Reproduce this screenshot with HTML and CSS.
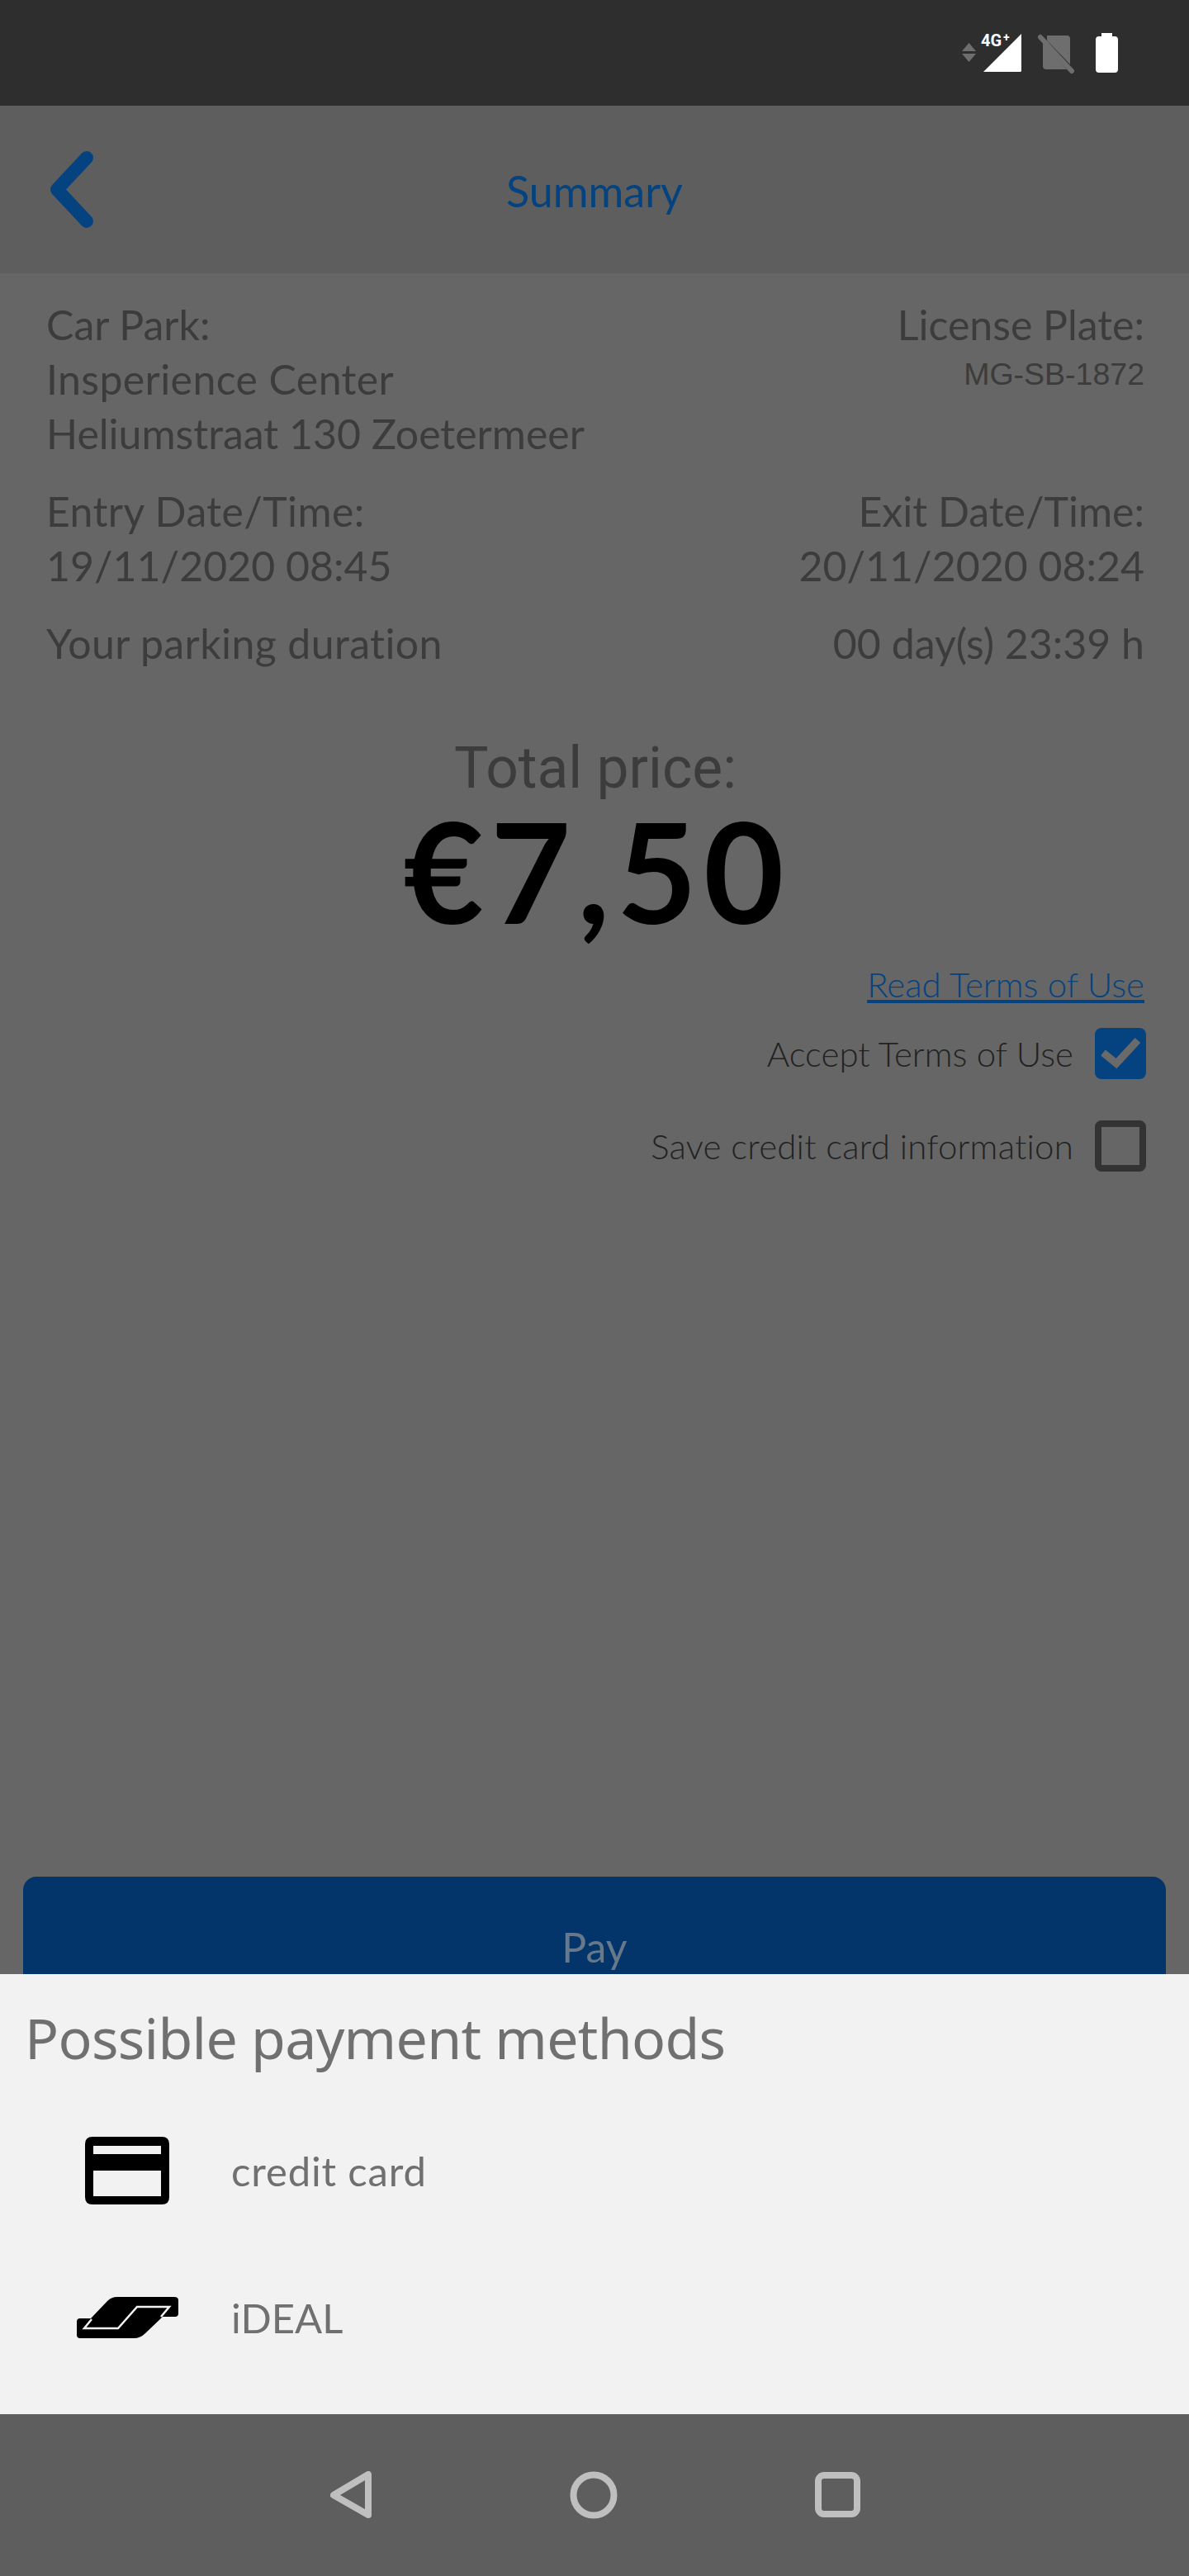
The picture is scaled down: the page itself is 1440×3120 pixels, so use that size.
FILE: index.html
```html
<!DOCTYPE html>
<html lang="en">
<head>
<meta charset="utf-8">
<title>Summary</title>
<link rel="stylesheet" href="styles.css">
</head>
<body>
<div class="screen">
  <div class="status">
    <svg class="status-icons" width="200" height="60" viewBox="0 0 200 60">
      <path class="dim" d="M5 22 L13.5 12 L22 22Z M5 25 L13.5 35 L22 25Z"/>
      <path class="white" d="M31 47 L77 1 V45.5 Q77 47 75.500 47Z"/>
      <text x="28" y="16" class="net">4G</text>
      <text x="55" y="10" class="net-plus">+</text>
      <path class="dim" d="M108 3 H132 Q136 3 136 7 V38 L108 9Z M103 10 L132 44 H107 Q103 44 103 40Z"/>
      <path class="slash" d="M100 5 L138 46"/>
      <path class="white" d="M174 0 H187 V4 H190 Q194 4 194 8 V44 Q194 48 190 48 H171 Q167 48 167 44 V8 Q167 4 171 4 H174Z"/>
    </svg>
  </div>
  <header class="topbar">
    <svg class="back" width="56" height="96" viewBox="0 0 56 96">
      <path d="M46 9 L10 47.500 L46 86" />
    </svg>
    <h1 class="title">Summary</h1>
  </header>
  <main class="content">
    <div class="details">
      <div class="row">
        <div>Car Park:<br><span class="wide">Insperience Center</span><br>Heliumstraat 130 Zoetermeer</div>
        <div class="right">License Plate:<br><span class="plate">MG-SB-1872</span></div>
      </div>
      <div class="row">
        <div><span class="wide">Entry Date/Time:</span><br>19/11/2020 08:45</div>
        <div class="right">Exit Date/Time:<br>20/11/2020 08:24</div>
      </div>
      <div class="row">
        <div><span class="wide">Your parking duration</span></div>
        <div class="right">00 day(s) 23:39 h</div>
      </div>
    </div>
    <div class="price">
      <div class="price-label">Total price:</div>
      <div class="price-value">€7,50</div>
    </div>
    <div class="terms">
      <a class="terms-link">Read Terms of Use</a>
      <div class="check-row">
        <span>Accept Terms of Use</span>
        <span class="box checked">
          <svg width="62" height="62" viewBox="0 0 62 62"><path d="M10 30 L26 43 L52 15"/></svg>
        </span>
      </div>
      <div class="check-row">
        <span class="save-label">Save credit card information</span>
        <span class="box"></span>
      </div>
    </div>
    <button class="pay">Pay</button>
  </main>
  <section class="sheet">
    <h2 class="sheet-title">Possible payment methods</h2>
    <div class="method">
      <span class="method-icon">
        <svg width="124" height="84" viewBox="0 0 124 84">
          <path fill-rule="evenodd" d="M20 1 H104 Q113 1 113 10 V74 Q113 83 104 83 H20 Q11 83 11 74 V10 Q11 1 20 1Z M21 12 V22 H103 V12Z M21 42 V73 H103 V42Z"/>
        </svg>
      </span>
      <span class="credit-label">credit card</span>
    </div>
    <div class="method">
      <span class="method-icon">
        <svg width="124" height="50" viewBox="0 0 124 50">
          <path d="M50 0 H119 Q124 0 124 4 V20 Q124 24 120 24 H105 L84 44 Q78 50 70 50 H5 Q1 50 1 46 V30 Q1 26 5 26 H18 L38 5 Q43 0 50 0Z"/>
          <path class="card-line" d="M19 27 L10 38 H51 L74 12 H113 L103 24"/>
        </svg>
      </span>
      <span>iDEAL</span>
    </div>
  </section>
  <nav class="navbar">
    <svg width="52" height="58" viewBox="0 0 52 58"><path d="M46 4 V53 L4 29Z"/></svg>
    <svg width="58" height="58" viewBox="0 0 58 58"><circle cx="29" cy="29" r="24.500"/></svg>
    <svg width="58" height="58" viewBox="0 0 58 58"><rect x="5" y="5" width="47" height="47" rx="7"/></svg>
  </nav>
</div>
</body>
</html>
```
FILE: styles.css
```css
* { box-sizing: border-box; }
html, body { margin: 0; padding: 0; }
.screen {
  width: 1440px; height: 3120px; display: flex; flex-direction: column;
  background: #666; font-family: Lato, sans-serif; font-weight: 300; color: #333;
  overflow: hidden;
}
.status { height: 128px; flex: none; background: #2e2e2e; position: relative; }
.status-icons { position: absolute; left: 1160px; top: 40px; overflow: visible; }
.dim { fill: #6e6e6e; }
.white { fill: #fff; }
.net { font: 700 20px Roboto, sans-serif; fill: #fff; }
.net-plus { font: 700 14px Roboto, sans-serif; fill: #fff; }
.slash { stroke: #6e6e6e; stroke-width: 6; stroke-linecap: round; fill: none; }
.topbar { height: 203px; flex: none; background: #5e5e5e; display: flex; align-items: center; justify-content: center; position: relative; }
.back { position: absolute; left: 59px; top: 54px; }
.back path { fill: none; stroke: #04437f; stroke-width: 16; stroke-linecap: round; stroke-linejoin: round; }
.title { margin: 0; font: 400 52px/1 Lato, sans-serif; color: #04437f; position: relative; top: 1px; }
.content { flex: 1; min-height: 0; display: flex; flex-direction: column; overflow: hidden; }
.details { padding: 29px 56px 0; display: flex; flex-direction: column; gap: 28px; font-size: 50px; font-weight: 400; line-height: 66px; color: #3c3c3c; }
.row { display: flex; justify-content: space-between; }
.right { text-align: right; margin-right: -2px; }
.wide { letter-spacing: 0.4px; }
.plate { display: block; font: 400 37.5px/54px "Liberation Sans", sans-serif; }
.price { text-align: center; margin-top: 80px; }
.price-label { font: 400 69.500px/78px Roboto, sans-serif; color: #3c3c3c; padding-left: 2px; }
.price-value { font: 700 168px/168px Lato, sans-serif; color: #000; letter-spacing: 8px; padding-left: 6px; }
.terms { display: flex; flex-direction: column; align-items: flex-end; padding-right: 52px; font-size: 42px; }
.terms-link { color: #04437f; text-decoration: underline; margin-right: 2px; line-height: 58px; margin-top: 25px; }
.check-row { display: flex; align-items: center; gap: 26px; height: 62px; color: #222; }
.check-row:nth-child(2) { margin-top: 24px; }
.check-row:nth-child(3) { margin-top: 50px; }
.save-label { letter-spacing: 0.2px; }
.box { width: 62px; height: 62px; border-radius: 8px; border: 8px solid #333; }
.box.checked { border: 0; background: #04437f; }
.box svg { display: block; }
.box svg path { fill: none; stroke: #6a6a6a; stroke-width: 9; }
.pay {
  margin: auto 28px -52px; flex: none; height: 170px; border: 0; border-radius: 16px;
  background: #03356b; color: #66788a; font: 400 50px Lato, sans-serif; padding: 0;
}
.sheet { height: 533px; flex: none; background: #f2f2f2; color: #707070; }
.sheet-title { margin: 0 0 24px; padding: 29px 0 0 30px; font: 400 68px/96px "Noto Sans", sans-serif; letter-spacing: -0.7px; }
.method { display: flex; align-items: center; height: 178px; font: 400 49px Lato, sans-serif; gap: 64px; padding-left: 92px; }
.credit-label { letter-spacing: 0.85px; }
.method-icon { width: 124px; display: flex; align-items: center; justify-content: center; }
.card-line { fill: none; stroke: #f2f2f2; stroke-width: 2.500; }
.navbar { height: 196px; flex: none; background: #5e5e5e; display: flex; align-items: center; justify-content: center; gap: 238px; padding-left: 3px; }
.navbar svg path, .navbar svg circle, .navbar svg rect { fill: none; stroke: #bfbfbf; stroke-width: 8; stroke-linejoin: round; }
```
